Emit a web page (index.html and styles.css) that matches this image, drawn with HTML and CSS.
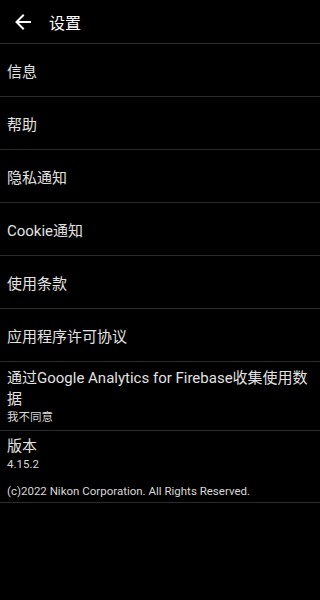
FILE: index.html
```html
<!DOCTYPE html>
<html lang="zh-CN">
<head>
<meta charset="utf-8">
<title>设置</title>
<link rel="stylesheet" href="styles.css">
</head>
<body>
<header class="bar">
  <svg class="back" width="16" height="16" viewBox="0 0 16 16" aria-hidden="true">
    <path d="M15 8H2M8 1.5L1.5 8 8 14.5" fill="none" stroke="#fff" stroke-width="2" stroke-linecap="square"/>
  </svg>
  <span class="title">设置</span>
</header>
<ul class="list">
  <li class="item">信息</li>
  <li class="item">帮助</li>
  <li class="item">隐私通知</li>
  <li class="item">Cookie通知</li>
  <li class="item">使用条款</li>
  <li class="item">应用程序许可协议</li>
  <li class="item multi">
    <div class="main">通过Google Analytics for Firebase收集使用数据</div>
    <div class="sub">我不同意</div>
  </li>
  <li class="item multi version">
    <div class="main">版本</div>
    <div class="sub">4.15.2</div>
    <div class="copy">(c)2022 Nikon Corporation. All Rights Reserved.</div>
  </li>
</ul>
</body>
</html>
```
FILE: styles.css
```css
html, body {
  margin: 0;
  padding: 0;
  background: #000;
  width: 320px;
  height: 600px;
  overflow: hidden;
}
body {
  font-family: Roboto, "Noto Sans CJK SC", sans-serif;
  color: #e2e2e2;
}
.bar {
  display: flex;
  align-items: center;
  border-bottom: 1px solid #2c2c2c;
  box-sizing: border-box;
  height: 44px;
}
.back {
  margin-left: 15px;
  margin-right: 18px;
}
.title {
  font-size: 16px;
  color: #fff;
}
.list {
  list-style: none;
  margin: 0;
  padding: 0;
}
.item {
  height: 53px;
  box-sizing: border-box;
  border-bottom: 1px solid #2c2c2c;
  display: flex;
  align-items: center;
  padding: 0 8px 0 7px;
  font-size: 15px;
}
.item.multi {
  display: block;
  height: auto;
  padding-top: 6px;
  padding-bottom: 6px;
}
.main {
  line-height: 21px;
  font-size: 15px;
}
.sub {
  font-size: 11.5px;
  line-height: 14px;
  color: #d8d8d8;
}
.version {
  padding-top: 5px;
  padding-bottom: 4px;
}
.item.multi.version {
  padding-top: 5px;
  padding-bottom: 4px;
}
.copy {
  font-size: 11.5px;
  line-height: 14px;
  margin-top: 13px;
  color: #d8d8d8;
}
```
